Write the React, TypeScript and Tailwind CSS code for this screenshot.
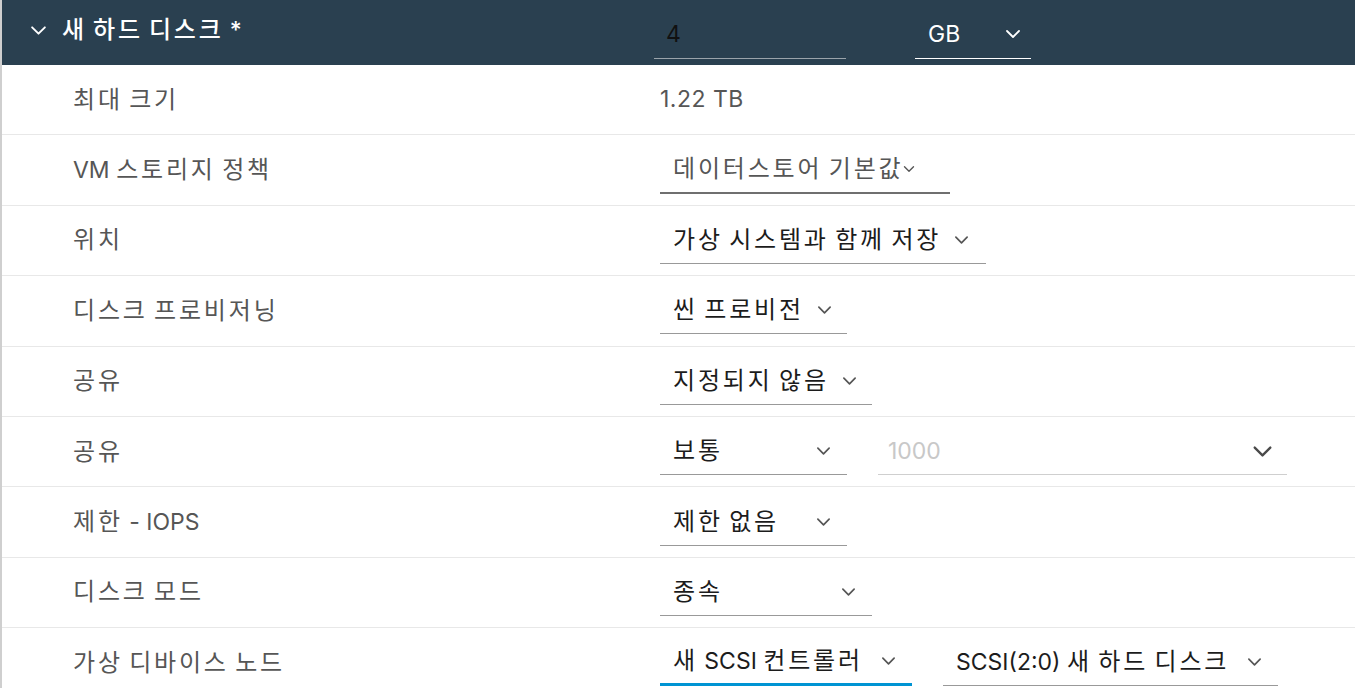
import React from "react";

const font = {
  fontFamily: '"Inter", "Noto Sans CJK KR", "Noto Sans", sans-serif',
};

// hangul runs are set a bit larger and looser than the latin text
const K = ({ text }: { text: string }) => (
  <>
    {text.split(/([\uAC00-\uD7A3]+)/).map((part, i) =>
      /[\uAC00-\uD7A3]/.test(part) ? (
        <span key={i} className="text-[24px] tracking-[2.8px]">
          {part}
        </span>
      ) : (
        <span key={i}>{part}</span>
      )
    )}
  </>
);

// thin chevron used inside the selects
const Chevron = ({ className = "" }: { className?: string }) => (
  <svg viewBox="0 0 16 10" fill="none" className={className}>
    <path d="M2 2l6 6 6-6" stroke="currentColor" strokeWidth="1.8" strokeLinecap="round" strokeLinejoin="round" />
  </svg>
);

type SelectProps = {
  value: string;
  width: string;
  textClass?: string;
  chevronClass?: string;
  lineClass?: string;
  spread?: boolean;
};

const Select = ({
  value,
  width,
  textClass = "text-[#1c1c1c]",
  chevronClass = "w-[15px] h-[10px] ml-[13px] text-[#555]",
  lineClass = "border-b border-[#999]",
  spread = false,
}: SelectProps) => (
  <div className={`flex items-center h-[47px] pl-[13px] pr-[16px] ${width} ${lineClass} ${spread ? "justify-between" : ""}`}>
    <span className={`whitespace-nowrap ${textClass}`}>
      <K text={value} />
    </span>
    <Chevron className={`shrink-0 ${chevronClass}`} />
  </div>
);

const Row = ({ label, children }: { label: string; children: React.ReactNode }) => (
  <div className="flex items-center h-[70.4px] border-b border-[#e8e8e8]">
    <div className="w-[658px] pl-[71px] text-[#565656] whitespace-nowrap">
      <K text={label} />
    </div>
    <div className="flex items-center">{children}</div>
  </div>
);

export default function App() {
  return (
    <div style={font} className="w-[1355px] h-[688px] overflow-hidden bg-white border-l-2 border-[#cfcfcf] text-[23px]">
      {/* header bar */}
      <div className="flex items-center h-[65px] bg-[#2a4050] text-white">
        <div className="flex items-center w-[652px] pl-[28px] pb-[5px]">
          <Chevron className="w-[17px] h-[11px] text-white" />
          <span className="ml-[15px] font-medium whitespace-nowrap">
            <K text="새 하드 디스크 *" />
          </span>
        </div>
        <div className="flex items-center h-[53px] w-[192px] pl-[12px] border-b border-[#9aa3aa] text-[#111] pt-[4px]">
          4
        </div>
        <div className="flex items-center justify-between h-[53px] w-[116px] ml-[69px] pl-[13px] pr-[10px] border-b border-white pt-[4px]">
          <span>GB</span>
          <Chevron className="w-[16px] h-[10px] text-white" />
        </div>
      </div>

      <Row label="최대 크기">
        <span className="text-[#565656] tracking-[0.5px]">1.22 TB</span>
      </Row>
      <Row label="VM 스토리지 정책">
        <Select
          value="데이터스토어 기본값"
          width="w-[290px]"
          textClass="text-[#565656]"
          chevronClass="w-[12px] h-[8px] ml-[0px] text-[#555]"
          lineClass="border-b-2 border-[#6f6f6f]"
        />
      </Row>
      <Row label="위치">
        <Select value="가상 시스템과 함께 저장" width="w-[326px]" />
      </Row>
      <Row label="디스크 프로비저닝">
        <Select value="씬 프로비전" width="w-[187px]" />
      </Row>
      <Row label="공유">
        <Select value="지정되지 않음" width="w-[212px]" />
      </Row>
      <Row label="공유">
        <Select value="보통" width="w-[187px]" spread />
        <div className="flex items-center justify-between h-[47px] w-[409px] ml-[31px] pl-[10px] pr-[14px] border-b border-[#cfcfcf]">
          <span className="text-[#c8c8c8]">1000</span>
          <Chevron className="w-[21px] h-[13px] text-[#4a4a4a]" />
        </div>
      </Row>
      <Row label="제한 - IOPS">
        <Select value="제한 없음" width="w-[187px]" spread />
      </Row>
      <Row label="디스크 모드">
        <Select value="종속" width="w-[212px]" spread />
      </Row>
      <Row label="가상 디바이스 노드">
        <Select value="새 SCSI 컨트롤러" width="w-[252px]" lineClass="border-b-[3px] border-[#0094d3]" spread />
        <div className="ml-[31px]">
          <Select value="SCSI(2:0) 새 하드 디스크" width="w-[335px]" spread />
        </div>
      </Row>
    </div>
  );
}
